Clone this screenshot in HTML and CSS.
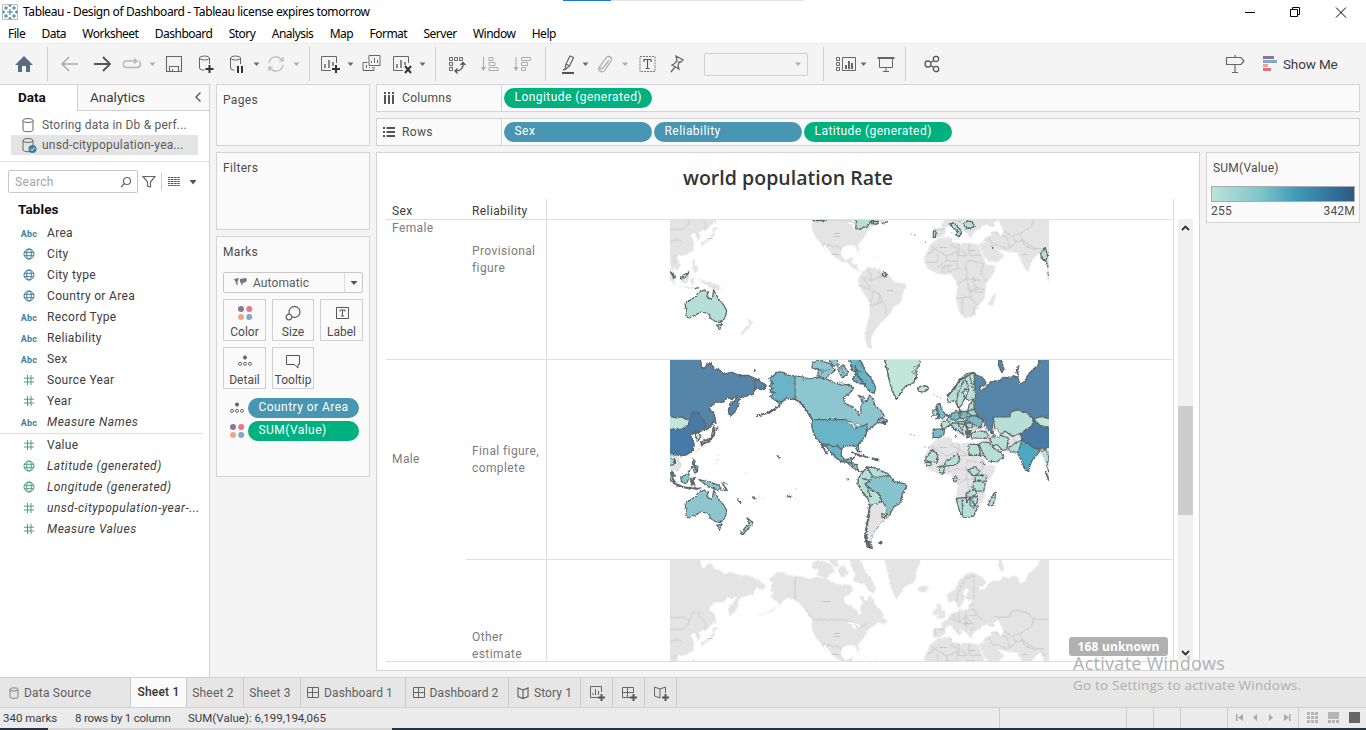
FILE: index.html
```html
<!DOCTYPE html>
<html lang="en">
<head>
<meta charset="utf-8">
<title>Tableau - Design of Dashboard</title>
<link rel="stylesheet" href="styles.css">
</head>
<body>
<svg class="defs" width="0" height="0">
  <defs>
    <filter id="rough" x="0" y="0" width="1" height="1"><feTurbulence type="fractalNoise" baseFrequency="0.16" numOctaves="2" seed="4"/><feDisplacementMap in="SourceGraphic" scale="9" xChannelSelector="R" yChannelSelector="G"/></filter>
    <g id="i-caret"><path d="M-3-1.500H3L0 2z" fill="#6b6b6b"/></g>
    <g id="i-abc"><text x="0" y="4" text-anchor="middle" class="abc">Abc</text></g>
    <g id="i-globe" fill="none" stroke="currentColor"><circle r="5"/><ellipse rx="2.300" ry="5"/><path d="M-5-1.700H5M-5 1.700H5" /></g>
    <g id="i-hash" fill="none" stroke="currentColor"><path d="M-1.500-5V5M2-5V5M-5-1.800H5M-5 2H5"/></g>
    <g id="i-four"><circle cx="-4" cy="-4" r="3" fill="#87779b"/><circle cx="4.200" cy="-4" r="3" fill="#ed7587"/><circle cx="-4" cy="4" r="3" fill="#eca884"/><circle cx="4.200" cy="4" r="3" fill="#84a7c9"/></g>
    <g id="i-detail" fill="none" stroke="#666"><circle cy="-3.500" r="1.600" fill="#666"/><circle cx="-5" cy="2.800" r="1.500"/><circle cy="2.800" r="1.500"/><circle cx="5" cy="2.800" r="1.500"/></g>
    <g id="i-db" fill="none" stroke="#666"><ellipse cy="-4.500" rx="5" ry="2"/><path d="M-5-4.500V5C-5 7.300 5 7.300 5 5V-4.500"/></g>
    <g id="i-book" fill="none" stroke="#666" stroke-width="1.200"><path d="M0-3L-5-5V3.500L0 5.500L5 3.500V-5zV5.500"/></g>

    <g id="west">
      <path d="M20 5H120L124 34L133 40L142 27L154 25L160 38L180 45L190 57L215 51L240 61L262 60L282 68L300 76L318 93L308 104L292 97L284 104L280 117L262 121L240 127L230 158L222 172L210 183L205 165L212 146L224 137L232 122L214 130L202 127L190 140L165 140L150 155L147 165L160 170L165 190L155 207L142 222L130 224L117 231L121 246L115 255L108 247L105 232L92 240L100 255L102 270L98 285L80 298L65 301L50 300L55 315L62 330L50 346L42 335L37 348L46 365L38 355L30 320H20z"/>
      <path d="M161 171L166 190L168 205L162 200zM160 213L174 219L164 225L161 242L147 254L140 261L122 268L128 258L145 252L155 240zM122 262L130 265L127 274zM98 310L106 318L101 327L114 334L112 348L104 354L98 335zM84 351L97 334M22 345L34 356L48 388L32 375zM62 367L75 360L85 354L89 365L79 385L65 381zM92 369L106 366L99 374L105 390L98 384L95 392zM48 391L75 397L110 401L125 397M115 372L130 376L150 380L177 390L185 405L198 405L168 402L149 395L130 383zM190 380L204 387M75 445L90 435L105 425L115 412L125 408L133 404L145 412L140 422L152 432L158 425L161 404L168 417L175 430L190 448L200 465L197 482L190 495L180 502L165 498L150 488L149 478L138 473L122 470L105 480L85 488L77 480L79 465zM170 509L184 508L179 523zM261 488L268 493L278 502L270 516L264 519L249 537L241 536L257 515L269 508zM278 47L290 44"/>
      <path d="M405 62L385 60L368 51L352 50L339 63L326 70L341 84L328 92L338 98L328 109L343 111L332 125L345 134L355 141L360 149L330 171L290 181L315 176L350 157L370 136L381 127L405 132L420 141L436 161L458 193L456 215L462 237L472 252L485 264L492 280L502 296L494 283L491 265L508 285L514 295L530 309L545 319L560 320L578 337L594 345L607 352L615 349L596 347L590 328L574 325L576 313L583 305L568 310L555 315L543 299V286L549 275L564 271L583 270L594 289L600 289L593 269L605 255L617 240L622 226L635 215L655 201L676 205L682 194L666 188L652 195L673 182L663 166L645 150L639 131L629 119L620 139L610 125L597 121L610 143L602 151L603 174L597 180L592 166L571 151L555 144L550 127L566 117L580 99L568 87L545 89L521 82L500 72L470 65L450 71L430 65z"/>
      <path d="M458 22L475 14L510 25L525 46L495 70L472 59L477 43L456 38zM502 5L519 31L535 35L530 5zM533 42L549 28L566 53L546 67zM557 5L570 15L576 43L588 55L578 75L600 85L615 85L625 105L642 115L647 96L632 67L616 50L604 20L590 5zM672 5L682 45L688 75L696 105L709 132L723 112L735 93L760 82L769 65L768 45L777 29L784 5zM773 101L785 91L801 93L807 101L791 110L778 108zM586 294L602 299L625 306M635 308L655 313M665 198L683 198L671 206zM350 300L360 307M276 424L286 431M233 433L244 442"/>
      <path d="M595 370L605 355L622 335L645 338L669 349L685 357L695 370L705 380L735 386L740 393L727 415L722 442L700 455L688 480L675 490L665 500L652 517L640 530L632 555L637 580L622 575L615 545L618 520L628 480L630 450L624 430L607 410L594 387z"/>
    </g>
    <g id="east">
      <path d="M294 141L292 118L315 101L327 75L350 55L370 51L400 68L408 82L402 91L388 94L390 104L405 99L417 84L430 76L447 78L460 65L482 69L490 61L503 66L510 85L525 79L535 57L564 29L573 5H610V380L596 378L588 352L597 340L585 319L580 310L574 289L560 300L548 312L541 328L536 349L524 340L512 311L502 292L480 290L458 285L435 280L412 262L398 256L405 249L425 238L422 228L403 217L389 220L372 230L361 248L353 236L339 225L325 219L336 232L329 241L311 222L300 208L286 218L284 237L265 247L249 246L250 221L276 219L274 201L289 195L304 175L325 171L329 159L335 165L354 164L357 149L370 132L353 135L347 128L356 102L348 100L338 110L345 125L335 149L325 159L315 135z"/>
      <path d="M222 310L240 270L262 250L300 245L307 260L332 266L350 262L385 267L395 299L410 328L437 331L429 358L410 381L405 405L403 430L385 452L371 482L344 488L331 476L318 434L322 405L321 385L312 370L300 355L272 357L252 350L232 340zM387 267L397 260L417 262L432 279L445 287L464 302L441 320L415 317L401 300zM417 440L429 419L437 411L435 430L428 451L416 450zM249 167L259 160L265 178L248 180zM257 190L268 180L260 158L261 146L270 144L273 158L286 177L283 188zM448 5L445 29L456 52L462 40L454 16L458 5zM536 348L542 350M308 18L320 12M308 226L312 240"/>
    </g>
    <g id="borders">
      <path d="M30 183L48 188L65 185L88 195L99 172L112 170L125 188L139 206L133 219L142 225M30 223L64 222L85 208L88 195M405 62V132L436 161L458 193H555L570 198L590 214L611 211L622 205M485 265L508 268L522 276L533 270L545 284M615 365L632 376L660 365L680 361M600 390L635 405L655 412L666 437L680 460L675 478M630 450L653 445L666 440M622 337L634 360L632 376M608 366L632 400M640 408L630 450M653 445L660 420L650 412M657 345L662 365M672 349L676 360M30 260L55 252L70 262M48 299L38 310L48 325"/>
      <g transform="translate(570)"><path d="M320 140L324 112L345 70L372 60L371 134M430 185H479L483 170L502 164L532 173L550 190L597 194M435 204L426 224L450 238L466 228L487 243L510 235L546 212L550 191M300 190L324 200L345 188L370 205M325 168L328 199M347 166L349 217M372 160L382 181L406 198M284 222L255 220L255 242M417 248L430 272L441 267L471 282M474 247L476 278L499 261L517 254L552 278L580 281M240 270L290 302L322 288M302 248L305 270L357 300M263 295L262 321H224M326 264V301L357 300V267M263 335L290 315L322 319M273 354L278 334L310 328M322 385L350 370V340L320 340M350 370L390 375M352 314L400 324M318 429L360 425V405L388 400M337 478V430M362 408L402 411M371 363L374 408M357 300H395M290 302V318M322 288L322 340M322 340L296 350M250 270V290L230 296M400 324L392 355L410 378M352 314L345 340M350 370L358 405M376 395L404 405M360 425L385 452M371 482L372 450M283 335V356M295 330V354M517 254L525 270L560 285M510 235L517 254M487 243L499 261M450 238L474 247M572 284L578 300L590 296M310 175L315 195M337 190L352 183M360 180L384 181M335 205L370 205M357 150L372 148M354 165L372 160M362 229L372 215"/></g>
    </g>
    <g id="base-map"><g filter="url(#rough)" fill="#e4e4e4" stroke="#e4e4e4"><use href="#west"/><use href="#east" transform="translate(570)"/></g><use href="#borders" fill="none" stroke="#bbb" stroke-width="1.800" filter="url(#rough)"/><g fill="#fff"><path d="M963 215l17-8 13 8 18-4 5 16-29 4-22 5zM1000 202l16-7 5 14 10 21-8 13-10-13z"/><path d="M564 200l18 4 9 17-12-3-2-11-10-2zM585 204l18 7-9 4z"/></g><g class="mapword"><text x="520" y="237">United</text><text x="520" y="246">States</text><text x="487" y="139">Canada</text><text x="515" y="298">Mexico</text><text x="682" y="408">Brazil</text><text x="840" y="278">Algeria</text><text x="928" y="287">Egypt</text><text x="1085" y="298">India</text><text x="140" y="250">Japan</text><text x="118" y="450">Australia</text></g></g>
  </defs>
</svg>

<div class="app">
  <header class="titlebar">
    <svg class="logo" width="18" height="18" viewBox="-9 -9 18 18"><path d="M-7.500-7.500H7.500V7.500H-7.500z" fill="#fff" stroke="#aaa" stroke-width=".8"/><path d="M0-3V3M-3 0H3M-4-6V-2M-6-4H-2M4-6V-2M2-4H6M-4 2V6M-6 4H-2M4 2V6M2 4H6M0-7.500V-5M-1.500-6.300H1.500M0 5V7.500M-1.500 6.300H1.500M-7.500 0H-5M-6.300-1.500V1.500M5 0H7.500M6.300-1.500V1.500" stroke="#3e819b" stroke-width="1.100"/></svg>
    <span class="caption">Tableau - Design of Dashboard - Tableau license expires tomorrow</span>
    <span class="progress"></span>
    <svg class="winbtns" width="120" height="20" viewBox="1240 0 120 20" fill="none" stroke="#000"><path d="M1245 10.500H1255M1290.500 7.500H1297.500V14.500H1290.500zM1292.500 7V5.500H1299.500V12.500H1298M1336 5.500L1346 15.500M1346 5.500L1336 15.500"/></svg>
  </header>
  <nav class="menu"><span>File</span><span>Data</span><span>Worksheet</span><span>Dashboard</span><span>Story</span><span>Analysis</span><span>Map</span><span>Format</span><span>Server</span><span>Window</span><span>Help</span></nav>

  <div class="toolbar">
    <div class="group g1"><svg width="47" height="24" viewBox="-24 -12 47 24"><path d="M0-8L9 1H6V8H2V2H-2V8H-6V1H-9z" fill="#5b6b7e"/></svg></div>
    <div class="group g2">
      <svg width="32" height="24" viewBox="-16 -12 32 24"><path d="M8 0H-7M-1-7L-8 0L-1 7" stroke="#aaa" fill="none" stroke-width="1.500"/></svg>
      <svg width="32" height="24" viewBox="-16 -12 32 24"><path d="M-8 0H7M1-7L8 0L1 7" stroke="#555" fill="none" stroke-width="1.800"/></svg>
      <svg width="28" height="24" viewBox="-14 -12 28 24"><path d="M-1-3H-5C-10-3-10 3.500-5 3.500H5C9 3.500 9-1 7-3M-1-3H4M2-5.500L5-3L2-.5" stroke="#b5b5b5" fill="none" stroke-width="1.400"/></svg>
      <svg class="dim" width="13" height="24" viewBox="-6.500 -12 13 24"><use href="#i-caret"/></svg>
      <svg width="30" height="24" viewBox="-15 -12 30 24"><path d="M-7.500-7.500H7.500V7.500H-7.500zM-4.500 7V2.500H4.500V7M-1.500 7V5" stroke="#666" fill="none" stroke-width="1.100"/></svg>
      <svg width="33" height="24" viewBox="-16.500 -12 33 24"><g fill="none" stroke="#666"><ellipse cy="-6" cx="-1" rx="5" ry="2"/><path d="M-6-6V4C-6 6-3 6-1 6M4-6V0"/><path d="M4 1V9M0 5H8" stroke="#333" stroke-width="2"/></g></svg>
      <svg width="29" height="24" viewBox="-14.500 -12 29 24"><g fill="none" stroke="#666"><ellipse cy="-6" cx="-1" rx="5" ry="2"/><path d="M-6-6V4C-6 6-3 6-2 6M4-6V0"/><path d="M1.500 2V9M5.500 2V9" stroke="#333" stroke-width="2"/></g></svg>
      <svg width="11" height="24" viewBox="-5.500 -12 11 24"><use href="#i-caret"/></svg>
      <svg width="28" height="24" viewBox="-14 -12 28 24"><path d="M-7-1A7 7 0 0 1 5-5L7-3M7-7V-3H3M7 1A7 7 0 0 1-5 5L-7 3M-7 7V3H-3" stroke="#b5b5b5" fill="none" stroke-width="1.200"/></svg>
      <svg class="dim" width="13" height="24" viewBox="-6.500 -12 13 24"><use href="#i-caret"/></svg>
    </div>
    <div class="group g3">
      <svg width="30" height="24" viewBox="-15 -12 30 24"><path d="M1 6.500H-8.500V-7.500H6.500V-1" stroke="#666" fill="none"/><path d="M-5 4V0M-1 4V-4M3 2V-2" stroke="#666" stroke-width="1.500"/><path d="M6 1V9M2 5H10" stroke="#333" stroke-width="2"/></svg>
      <svg width="11" height="24" viewBox="-5.500 -12 11 24"><use href="#i-caret"/></svg>
      <svg width="31" height="24" viewBox="-15.500 -12 31 24"><path d="M-2.500-8.500H8.500V1.500H-2.500zM-4-1.500H-8.500V6.500H2.500V3M0-1V-3M3-1V-6M6-1V-4M-5 4V1M-2 4V3M1 4V3" stroke="#666" fill="none"/></svg>
      <svg width="30" height="24" viewBox="-15 -12 30 24"><path d="M1 6.500H-8.500V-7.500H6.500V-1" stroke="#666" fill="none"/><path d="M-5 4V0M-1 4V-4M3 1V-2" stroke="#666" stroke-width="1.500"/><path d="M3 2L9 9M9 2L3 9" stroke="#333" stroke-width="2"/></svg>
      <svg width="11" height="24" viewBox="-5.500 -12 11 24"><use href="#i-caret"/></svg>
    </div>
    <div class="group g4">
      <svg width="32" height="24" viewBox="-16 -12 32 24"><path d="M-7.500-6.500h3v3h-3zM-2.500-6.500h3v3h-3zM2.500-6.500h3v3h-3zM-7.500-1.500h3v3h-3zM-7.500 3.500h3v3h-3z" stroke="#666" fill="none"/><path d="M6-1C7 4 3 7-1 7M3.500 1L6-1.500L8.500 1M.5 4.500L-2 7L.5 9.500" stroke="#555" fill="none" stroke-width="1.300"/></svg>
      <svg width="33" height="24" viewBox="-16.500 -12 33 24"><path d="M-6-7V5M-.5-6.500h4v3h-4zM-.5-1.500h6v3h-6zM-.5 3.500h9v3h-9z" stroke="#aaa" fill="none"/><path d="M-8.500 3H-3.500L-6 7z" fill="#aaa"/></svg>
      <svg width="32" height="24" viewBox="-16 -12 32 24"><path d="M-6-7V5M-.5-6.500h9v3h-9zM-.5-1.500h6v3h-6zM-.5 3.500h4v3h-4z" stroke="#aaa" fill="none"/><path d="M-8.500 3H-3.500L-6 7z" fill="#aaa"/></svg>
    </div>
    <div class="group g5">
      <svg width="26" height="24" viewBox="-13 -12 26 24"><path d="M-2 0L2-8L5.500-6.500L1.500 2L-3 5.500zM-2 0L1.500 2M-3 5L-5 6" stroke="#666" fill="none" stroke-width="1.200"/><path d="M-6 9H6" stroke="#555" stroke-width="2"/></svg>
      <svg width="9" height="24" viewBox="-4.500 -12 9 24"><use href="#i-caret"/></svg>
      <svg width="30" height="24" viewBox="-15 -12 30 24"><path d="M4-4L-2 4C-4 6-6 4-5 2L1-6C3-9 8-7 6-3L0 6C-3 10-8 6-6 3M3-2L-1 3" stroke="#aaa" fill="none" stroke-width="1.200"/></svg>
      <svg class="dim" width="10" height="24" viewBox="-5 -12 10 24"><use href="#i-caret"/></svg>
      <svg width="35" height="24" viewBox="-17.500 -12 35 24"><path d="M-7.500-7.500H7.500V7.500H-7.500z" stroke="#777" fill="none" stroke-dasharray="2 1"/><path d="M-3.500-2V-4.500H3.500V-2M0-4V4M-2 4.500H2" stroke="#555" fill="none" stroke-width="1.200"/></svg>
      <svg width="24" height="24" viewBox="-12 -12 24 24"><path d="M-1-8L6-4L4-2L2-2L1 2L2 5L-5 1L-3 0L0-3zM-2 3L-6 8" stroke="#666" fill="none" stroke-width="1.300"/></svg>
      <div class="combo"><svg class="dim" width="12" height="10" viewBox="-6 -5 12 10"><use href="#i-caret"/></svg></div>
    </div>
    <div class="group g6">
      <svg width="28" height="24" viewBox="-14 -12 28 24"><path d="M-8.500-6.500h3v3h-3zM-8.500-1.500h3v3h-3zM-8.500 3.500h3v3h-3zM-2.500-6.500H10.500V6.500H-2.500z" stroke="#666" fill="none"/><path d="M1 5V1M4 5V-3M7 5V-1" stroke="#666" stroke-width="2"/></svg>
      <svg width="9" height="24" viewBox="-4.500 -12 9 24"><use href="#i-caret"/></svg>
      <svg width="34" height="24" viewBox="-18 -12 34 24"><path d="M-8.500-6H8.500" stroke="#666" stroke-width="2"/><path d="M-6.500-5V3.500H6.500V-5M0 4V7.500M-3 7.500H3" stroke="#666" fill="none"/></svg>
    </div>
    <div class="group g7"><svg width="30" height="24" viewBox="-15 -12 30 24"><g stroke="#555" fill="none" stroke-width="1.300"><circle cx="-4" r="3"/><circle cx="4" cy="-5" r="2.700"/><circle cx="4" cy="5" r="2.700"/><path d="M-1.500-1.500L2-3.500M-1.500 1.500L2 3.500"/></g></svg></div>
    <svg class="guide" width="20" height="24" viewBox="-10 -12 20 24"><path d="M-8.500-6.500H6L9-3L6 .5H-8.500zM0-9V-7M0 1V9M-3 8.500H3" stroke="#666" fill="none" stroke-width="1.200"/></svg>
    <svg class="showicon" width="16" height="18" viewBox="0 0 16 18"><path d="M0 1h11v3H0z" fill="#87779b"/><path d="M0 5h14v3H0z" fill="#84a7c9"/><path d="M0 9h5v3H0z" fill="#eca884"/><path d="M0 13h8v3H0z" fill="#e06f82"/></svg>
    <span class="showme">Show Me</span>
  </div>

  <main class="main">
    <aside class="side">
      <div class="sidetabs"><b>Data</b><span>Analytics</span><svg width="8" height="12" viewBox="0 0 8 12"><path d="M6.500 1.500L2 6L6.500 10.500" fill="none" stroke="#555" stroke-width="1.300"/></svg></div>
      <div class="sources">
        <div class="src"><svg width="16" height="16" viewBox="-7 -8 16 16"><use href="#i-db" /></svg><span>Storing data in Db &amp; perf...</span></div>
        <div class="src on"><svg width="16" height="16" viewBox="-7 -8 16 16"><use href="#i-db"/><circle cx="4.500" cy="4" r="4" fill="#3f7d9c"/><path d="M2.500 4L4 5.500L6.700 2.500" fill="none" stroke="#fff"/></svg><span>unsd-citypopulation-yea...</span></div>
      </div>
      <div class="searchrow"><div class="search"><span>Search</span><svg width="12" height="12" viewBox="0 0 12 12"><g fill="none" stroke="#666" stroke-width="1.200"><circle cx="7" cy="5" r="3.500"/><path d="M4.500 7.500L1 11"/></g></svg></div>
        <svg width="14" height="14" viewBox="0 0 14 14"><path d="M1 1.500H13L8.500 7V12L5.500 11V7z" fill="none" stroke="#666" stroke-width="1.200"/></svg><i></i>
        <svg class="lines" width="12" height="11" viewBox="0 0 12 11"><path d="M0 1.500H12M0 3.500H12M0 5.500H12M0 7.500H12M0 9.500H12" stroke="#555" stroke-dasharray="2.500 .6"/></svg><svg width="8" height="6" viewBox="-4 -3 8 6"><path d="M-3.500-2H3.500L0 2.500z" fill="#555"/></svg></div>
      <h2>Tables</h2>
      <ul class="fields dims">
        <li><svg viewBox="-9 -8 18 16"><use href="#i-abc"/></svg>Area</li>
        <li><svg viewBox="-9 -8 18 16"><use href="#i-globe"/></svg>City</li>
        <li><svg viewBox="-9 -8 18 16"><use href="#i-globe"/></svg>City type</li>
        <li><svg viewBox="-9 -8 18 16"><use href="#i-globe"/></svg>Country or Area</li>
        <li><svg viewBox="-9 -8 18 16"><use href="#i-abc"/></svg>Record Type</li>
        <li><svg viewBox="-9 -8 18 16"><use href="#i-abc"/></svg>Reliability</li>
        <li><svg viewBox="-9 -8 18 16"><use href="#i-abc"/></svg>Sex</li>
        <li class="green"><svg viewBox="-9 -8 18 16"><use href="#i-hash"/></svg>Source Year</li>
        <li class="green"><svg viewBox="-9 -8 18 16"><use href="#i-hash"/></svg>Year</li>
        <li class="gen"><svg viewBox="-9 -8 18 16"><use href="#i-abc"/></svg>Measure Names</li>
      </ul>
      <ul class="fields meas">
        <li class="green"><svg viewBox="-9 -8 18 16"><use href="#i-hash"/></svg>Value</li>
        <li class="green gen"><svg viewBox="-9 -8 18 16"><use href="#i-globe"/></svg>Latitude (generated)</li>
        <li class="green gen"><svg viewBox="-9 -8 18 16"><use href="#i-globe"/></svg>Longitude (generated)</li>
        <li class="green gen"><svg viewBox="-9 -8 18 16"><use href="#i-hash"/></svg>unsd-citypopulation-year-...</li>
        <li class="green gen"><svg viewBox="-9 -8 18 16"><use href="#i-hash"/></svg>Measure Values</li>
      </ul>
    </aside>

    <section class="cards">
      <div class="card pages">Pages</div>
      <div class="card filters">Filters</div>
      <div class="card marks">Marks
        <div class="auto"><svg width="13" height="9" viewBox="0 0 13 9"><path d="M0 1l5-1-1 3-1 1 1 1-1 3-1-3-1-2zM6 1l6-1 1 2-2 3-1-1-1 1-1 3-1-3-1-1z" fill="#777"/></svg><span>Automatic</span><em><svg width="8" height="6" viewBox="-4 -3 8 6"><path d="M-3.500-2H3.500L0 2z" fill="#555"/></svg></em></div>
        <div class="buttons">
          <div><svg viewBox="-9 -9 18 18"><use href="#i-four"/></svg>Color</div>
          <div><svg viewBox="-9 -9 18 18"><g fill="#fafafa" stroke="#666" stroke-width="1.300"><circle cx="1.500" cy="-1" r="5.500"/><circle cx="-4" cy="4" r="2.800"/></g></svg>Size</div>
          <div><svg viewBox="-9 -9 18 18"><path d="M-5.500-5.500H6.500V5.500H-5.500zM-2-1.500V-3H3V-1.500M.5-3V3M-1 3H2" fill="none" stroke="#555"/></svg>Label</div>
          <div><svg viewBox="-9 -9 18 18"><use href="#i-detail"/></svg>Detail</div>
          <div><svg viewBox="-9 -9 18 18"><path d="M-6.500-5.500H6.500V3.500H5V7L1.500 3.500H-6.500z" fill="none" stroke="#555"/></svg>Tooltip</div>
        </div>
        <div class="enc"><svg viewBox="-9 -9 18 18"><use href="#i-detail"/></svg><span class="pill blue">Country or Area</span></div>
        <div class="enc"><svg viewBox="-9 -9 18 18"><use href="#i-four"/></svg><span class="pill">SUM(Value)</span></div>
      </div>
    </section>

    <section class="work">
      <div class="shelf"><div class="shelfname"><svg width="12" height="12" viewBox="0 0 12 12"><path d="M2 0V2M6 0V2M10 0V2M2 3V12M6 3V12M10 3V12" stroke="#555" stroke-width="2"/></svg>Columns</div><span class="pill">Longitude (generated)</span></div>
      <div class="shelf"><div class="shelfname"><svg width="12" height="12" viewBox="0 0 12 12"><path d="M0 2H2M0 6H2M0 10H2M3.500 2H12M3.500 6H12M3.500 10H12" stroke="#555" stroke-width="2"/></svg>Rows</div><span class="pill blue">Sex</span><span class="pill blue">Reliability</span><span class="pill">Latitude (generated)</span></div>
      <div class="lower">
        <div class="view">
          <h1>world population Rate</h1>
          <div class="viz">
            <div class="head"><span>Sex</span><span>Reliability</span></div>
            <div class="corner"></div>
            <div class="sex female">Female</div><div class="rel r1">Provisional figure</div>
            <div class="pane"><svg class="map m1" viewBox="30 194 1137 420">
              <use href="#base-map"/>
              <g filter="url(#rough)" fill="#b5dfd8" stroke="#56615f" stroke-width="3.500"><path d="M75 445L90 435L105 425L115 412L125 408L133 404L145 412L140 422L152 432L158 425L161 404L168 417L175 430L190 448L200 465L197 482L190 495L180 502L165 498L150 488L149 478L138 473L122 470L105 480L85 488L77 480L79 465zM170 509L184 508L179 523zM562 180L590 196L587 220L602 222L610 215L620 216L628 204L649 185L640 180M638 205L650 207L655 198L640 198zM820 227L829 227L826 246H820zM868 206L882 203L891 210L902 225L905 232L897 245L888 237L895 229L880 218zM911 205L922 197L937 199L943 211L932 220L916 217zM1142 294L1156 278L1163 300L1157 317L1144 309zM1160 318L1164 336M30 348L42 360L43 369zM60 370L73 357L86 350L78 365L65 371zM105 400L116 397M665 204L684 199M995 275L1000 277M875 231L879 235M889 240L899 243M1163 350L1167 361M458 196H500"/><circle cx="673" cy="358" r="6"/></g><path d="M752 235l3 1M762 238l5 3M795 261h3" stroke="#777" stroke-width="3"/></svg></div>
            <div class="sex male">Male</div><div class="rel r2">Final figure, complete</div>
            <div class="pane"><svg class="map m2" viewBox="30 14 1137 600">
              <use href="#base-map"/>
              <g filter="url(#rough)" stroke="#5f6668" stroke-width="3.500" stroke-linejoin="round">
                <use href="#west" fill="#8ec6cf"/>
                <path fill="#5486a9" d="M20 5H120L124 34L133 40L142 27L154 25L160 38L180 45L190 57L215 51L240 61L262 60L282 68L300 76L318 93L308 104L292 97L284 104L280 117L262 121L240 127L230 158L222 172L210 183L205 165L212 146L224 137L232 122L214 130L202 127L190 140L165 140L150 155L147 165L160 170L165 190L155 207L142 222L130 224L139 206L125 188L112 170L99 172L88 195L65 185L48 188L20 180zM284 68V104"/>
                <path fill="#477aa6" d="M20 222L64 222L85 208L88 195L99 172L112 170L125 188L139 206L133 219L117 231L105 228L92 240L100 255L102 270L98 285L80 298L65 301L48 299L20 289z"/>
                <path fill="#c3e6da" d="M20 180L48 188L65 185L88 195L85 208L64 222H20zM117 231L121 246L115 255L108 247L105 232zM672 5L682 45L688 75L696 105L709 132L723 112L735 93L760 82L769 65L768 45L777 29L784 5zM773 101L785 91L801 93L807 101L791 110L778 108z"/>
                <path fill="#e3e3e3" stroke="#e3e3e3" d="M34 304L50 302L55 315L62 330L50 346L42 335L37 346L30 330z"/>
                <path fill="#a7d7d5" d="M26 308L44 313L43 328L26 330zM261 488L268 493L278 502L270 516L264 519L249 537L241 536L257 515L269 508z"/>
                <path fill="#6bb4c7" d="M405 62L385 60L368 51L352 50L339 63L326 70L341 84L328 92L338 98L328 109L343 111L332 125L345 134L355 141L370 136L381 127L405 132zM458 193H555L570 198L582 218L597 215L611 211L622 205L620 226L617 240L605 255L593 269L600 289L594 289L583 270L564 271L549 275L545 284L533 270L522 276L508 268L485 265L472 252L462 237L456 215zM485 265L508 268L522 276L533 270L545 284L543 299L555 315L568 310L583 305L576 313L574 325L560 320L545 319L530 309L508 285L491 265M557 5L570 15L576 43L588 55L578 75L600 85L615 85L625 105L642 115L647 96L632 67L616 50L604 20L590 5z"/>
                <path fill="#b7dfd7" d="M595 370L605 355L622 335L645 338L669 349L685 357L680 362L660 365L632 376L615 385L635 405L655 412L666 437L653 445L630 450L624 430L607 410L594 387zM605 369L632 376M622 336L638 363M620 390L632 425"/>
                <path fill="#87c3cd" d="M615 385L632 376V365H655L675 362L690 361L700 378L735 386L740 393L727 415L722 442L700 455L688 480L675 472L680 460L666 437L655 412L635 405z"/>
                <path fill="#e3e3e3" stroke="none" d="M632 451L653 445L666 440L679 457L676 478L688 481L676 492L665 501L651 518L641 529L633 557L623 565L620 540L630 486z"/>
                <path fill="#b7dfd7" d="M665 475L680 479L678 487L666 486z"/>
                <path fill="none" stroke-width="9" d="M616 535L620 558L631 577"/><path fill="none" stroke-width="5" d="M630 445L624 485L617 535M655 562H667M405 132L423 143L440 166L458 194M98 320L112 351M33 350L43 383L75 397L115 401M352 300L361 308M278 425L285 431M233 433L242 442M160 215L164 233L149 258L126 266M380 425L394 422M560 372H567M360 150L330 171L290 181M482 265L500 294M92 372L103 388M186 382L202 406M590 297L625 306M637 309L655 312"/>
                <path fill="none" stroke-width="2" d="M470 38L490 48L510 42M484 58L488 40M545 38L553 58M575 30L590 45L610 52M598 70L620 76M590 20L605 35M430 65V75M500 70L530 85L545 82L570 92M690 70L680 60M765 60L755 50L770 42M760 35L778 30"/>
                <path stroke-width="1.500" stroke-dasharray="3 9" fill="none" d="M298 422L314 434M405 400L415 405M385 415L424 440M175 300L171 330M255 350v3M107 290L130 276"/>
              </g>
              <path fill="#fff" stroke="#5f6668" stroke-width="1.500" d="M563 199l16 3 9 20-8-4-4-10-13-4zM590 203l14 7-9 4-8-6z"/>
              <g transform="translate(570)" filter="url(#rough)" stroke="#5f6668" stroke-width="3.500" stroke-linejoin="round">
                <path fill="#5486a9" d="M372 55L400 68L408 82L402 91L388 94L390 104L405 99L417 84L430 76L447 78L460 65L482 69L490 61L503 66L510 85L525 79L535 57L564 29L573 5H610V194L550 190L532 173L502 164L483 170L479 185H430L426 224L435 239L403 217L406 198L382 181L372 160L377 130zM448 5L445 29L456 52L462 40L454 16L458 5zM505 66L498 40L508 30"/>
                <path fill="#b7dfd7" d="M430 185H479L483 170L502 164L532 173L550 190L546 212L510 235L487 243L466 228L450 238L435 230zM294 141L292 118L315 101L327 75L350 55L372 52L377 130L353 135L347 128L356 102L348 100L338 110L345 125L335 149L325 159L315 135zM320 140L324 112L345 70L356 100M359 63L372 105M276 219L274 201L289 195L304 175L325 171L354 164L357 149L372 132V160L382 181L352 190L335 225L311 222L300 208L286 218zM362 235L385 225L409 230L417 242L405 249L365 248zM417 248L450 240L474 247L471 282L458 285L441 267L430 272zM387 267L397 260L417 262L432 279L445 287L464 302L441 320L415 317L401 300zM476 278L499 261L517 254L505 290H480zM357 267H385L393 300H357zM229 305L245 285L263 295L262 321H224zM224 322L239 318L245 330L232 332zM263 335L282 330L290 315L302 311L322 295L330 313L320 327L298 331L280 332zM268 335L283 335L280 354L269 352zM307 370L318 364L324 374L314 380zM352 344L377 335L390 351L371 363zM376 360H410L408 379L388 377L375 375zM371 379L390 374L405 387L401 407H376L369 396zM348 413L375 402L380 417L361 425L350 440zM318 429L360 425L373 450L385 452L371 482L344 488L331 476zM360 425L383 424L382 440L371 456L360 450zM337 478V430M417 440L429 419L437 411L435 430L428 451L416 450zM249 167L259 160L265 178L248 180zM574 289L587 281L598 310L589 329L597 350M395 320L405 329"/>
                <path fill="#79bbc9" d="M250 221L284 222L281 239L265 247L249 246zM305 174L323 168L330 187L317 196L300 190zM331 168L352 169L351 187L334 190zM353 183L377 181L402 196L389 217L372 208L354 203zM257 190L268 180L260 158L261 146L270 144L273 158L286 177L283 188z"/>
                <path fill="#a7d7d5" d="M302 206L320 202L337 225L340 239L322 223L311 219zM324 200L345 197L343 207L325 205zM348 203L367 202L367 216L349 219zM346 228L363 226L358 245L351 248zM354 166L374 162L379 179L359 180z"/>
                <path fill="#477aa6" d="M510 235L546 212L550 191L570 210L610 222V270L580 281L552 278L517 254z"/>
                <path fill="#c3e6da" d="M551 190L573 184L610 192V218L570 210z"/>
                <path fill="#4da8c0" d="M502 292L508 280L517 254L552 278L572 284L560 300L548 312L541 328L536 349L524 340L512 311z"/>
                <path fill="#fff" stroke="#777" stroke-width="2" d="M428 225L440 216L450 238L449 247L437 244zM393 218L407 211L416 226L405 228L392 225L380 230L375 222z"/>
                <path fill="none" stroke-width="5" d="M292 125L330 74L370 52M350 230L353 245M288 175L297 186M585 345L597 376M327 162L335 174M314 240L320 244M295 197L298 202M5 290L35 304M65 311L88 316M15 30L22 60L35 75L45 95M345 100L340 110M258 152L268 185M346 205L358 240"/>
                <path fill="none" stroke-width="2" stroke-dasharray="4 7" d="M180 237L202 242M223 275L240 278M250 118L275 130"/>
              </g></svg></div>
            <div class="sex"></div><div class="rel r3">Other estimate</div>
            <div class="pane"><svg class="map m3" viewBox="30 14 1137 303"><use href="#base-map"/></svg></div>
          </div>
          <div class="scroll"><svg width="15" height="16" viewBox="0 0 15 16"><path d="M4 11L7.500 7.500L11 11" fill="none" stroke="#333" stroke-width="1.800"/></svg><i></i><svg width="15" height="16" viewBox="0 0 15 16"><path d="M4 6L7.500 9.500L11 6" fill="none" stroke="#333" stroke-width="1.800"/></svg></div>
          <div class="unknown">168 unknown</div>
        </div>
        <div class="legend"><span>SUM(Value)</span><div class="ramp"></div><div class="range"><span>255</span><span>342M</span></div></div>
      </div>
    </section>
  </main>

  <div class="tabs">
    <span class="ds"><svg viewBox="-8 -8 16 16"><g transform="scale(.8)"><use href="#i-db"/></g></svg>Data Source</span><span class="sheet active">Sheet 1</span><span class="sheet">Sheet 2</span><span class="sheet">Sheet 3</span>
    <span class="d1"><svg viewBox="-8 -8 16 16"><path d="M-5.500-5.500H5.500V4.500H-5.500zM-.5-5.500V4.500M-5.500-.5H5.500" class="ln"/></svg>Dashboard 1</span>
    <span class="d2"><svg viewBox="-8 -8 16 16"><path d="M-5.500-5.500H5.500V4.500H-5.500zM-.5-5.500V4.500M-5.500-.5H5.500" class="ln"/></svg>Dashboard 2</span>
    <span class="st"><svg viewBox="-8 -8 16 16"><use href="#i-book"/></svg>Story 1</span>
    <span class="add"><svg viewBox="-8 -8 16 16"><path d="M1 4.500H-6.500V-6.500H4.500V-1M-4 2V0M-1.500 2V-4M1.500 2V-2" class="ln"/><path d="M4.500 1V8M1 4.500H8" class="plus"/></svg></span>
    <span class="add"><svg viewBox="-8 -8 16 16"><path d="M1 4.500H-6.500V-5.500H4.500V0M-1.500-5.500V4.500M-6.500-.5H4.500" class="ln"/><path d="M4.500 1V8M1 4.500H8" class="plus"/></svg></span>
    <span class="add"><svg viewBox="-8 -8 16 16"><path d="M-1-4L-6.500-6V3L-1 5zL4.500-6V0" class="ln"/><path d="M4.500 1V8M1 4.500H8" class="plus"/></svg></span>
  </div>
  <footer class="status"><span class="s1">340 marks</span><span class="s2">8 rows by 1 column</span><span class="s3">SUM(Value): 6,199,194,065</span>
    <div class="cells"><i></i><i></i><i></i><i></i></div>
    <svg width="139" height="20" viewBox="1227 708 139 20"><path d="M1227.500 708V728M1298.500 708V728" stroke="#ccc"/><path d="M1236 714h1.500v7H1236zM1243 714v7l-5-3.500zM1257 714v7l-4-3.500zM1269 714v7l4-3.500zM1284 714v7l5-3.500zM1289 714h1.500v7H1289z" fill="#aaa"/><path d="M1307 712h3v3h-3zM1311 712h3v3h-3zM1315 712h3v3h-3zM1307 716h3v3h-3zM1311 716h3v3h-3zM1315 716h3v3h-3zM1307 720h3v3h-3zM1311 720h3v3h-3zM1315 720h3v3h-3zM1328 712h11v7h-11zM1328 720h3v3h-3zM1332 720h3v3h-3zM1336 720h3v3h-3z" fill="#b5b5b5"/><path d="M1349 712h11v11h-11z" fill="#666"/></svg>
  </footer>
  <div class="taskbar"><i></i></div>
  <div class="watermark"><div>Activate Windows</div><p>Go to Settings to activate Windows.</p></div>
</div>
</body>
</html>
```

FILE: styles.css
```css
* { box-sizing: border-box; }
body { margin: 0; background: #fff; font: 12px/16px Roboto, sans-serif; letter-spacing: .32px; color: #3c3c3c; overflow: hidden; }
svg { display: block; flex: none; }
.defs { position: absolute; }
.app { width: 1366px; height: 730px; display: flex; flex-direction: column; position: relative; }
.titlebar { height: 23px; display: flex; align-items: center; padding-left: 1px; font: 12px/22px "Noto Sans", sans-serif; color: #000; letter-spacing: -.39px; position: relative; }
.caption { margin-left: 4px; }
.progress { position: absolute; left: 563px; top: 0; width: 241px; height: 1px; background: linear-gradient(90deg, #1a7bd0 48px, #e2e2e2 48px); }
.winbtns { margin-left: auto; margin-right: 6px; }
.menu { height: 20px; display: flex; gap: 16.300px; padding-left: 8px; font: 12px/21px "Noto Sans", sans-serif; letter-spacing: -.5px; color: #000; }
.toolbar { height: 41px; background: #f4f4f4; border-top: 1px solid #ececec; display: flex; align-items: center; }
.group { height: 34px; display: flex; align-items: center; border-right: 1px solid #cfcfcf; }
.g1 { width: 48px; } .g2 { width: 262px; padding-left: 6px; } .g3 { width: 126px; padding-left: 5px; } .g4 { width: 110px; padding-left: 5px; } .g5 { width: 278px; padding-left: 9px; } .g6 { width: 82px; padding-left: 7px; } .g7 { width: 50px; padding-left: 11px; border: 0; }
.dim { opacity: .5; }
.combo { width: 104px; height: 23px; margin-left: 15px; border: 1px solid #d0d0d0; border-radius: 2px; display: flex; align-items: center; justify-content: flex-end; padding-right: 3px; }
.guide { margin-left: 269px; }
.showicon { margin-left: 18px; }
.showme { margin-left: 4px; font-size: 13.500px; letter-spacing: -.15px; }
.main { height: 593px; display: flex; background: #f4f4f4; }
.side { width: 210px; background: #fff; border-right: 1px solid #d0d0d0; border-top: 1px solid #d4d4d4; flex: none; }
.sidetabs { display: flex; height: 26px; font-size: 13.500px; line-height: 25px; letter-spacing: 0; color: #3c3c3c; }
.sidetabs b { width: 77px; padding-left: 18px; color: #111; }
.sidetabs span { border-left: 1px solid #d0d0d0; border-bottom: 1px solid #d0d0d0; background: #f9f9f9; width: 117px; padding-left: 12px; }
.sidetabs svg { height: 26px; width: 15px; padding: 6px 7px 7px 0; background: #f9f9f9; border-bottom: 1px solid #d0d0d0; flex: 1; }
.sources { padding: 4px 11px 6px; border-bottom: 1px solid #e0e0e0; height: 51px; color: #5c5c5c; letter-spacing: .2px; }
.src { height: 20px; display: flex; align-items: center; padding-left: 10px; }
.src span { margin-left: 5px; }
.src.on { background: #e4e4e4; }
.searchrow { display: flex; align-items: center; height: 23px; margin: 8px 0 0 8px; }
.search { width: 130px; height: 23px; border: 1px solid #c8c8c8; border-radius: 2px; display: flex; align-items: center; justify-content: space-between; padding: 0 5px 0 6px; color: #a3a3a3; margin-right: 4px; }
.searchrow i { width: 1px; height: 17px; background: #ccc; margin: 0 6px 0 5px; }
.lines { margin-right: 9px; }
.side h2 { margin: 7px 0 4px 18px; font-size: 13.500px; line-height: 18px; letter-spacing: .1px; color: #111; }
.fields { list-style: none; margin: 0; padding: 0; }
.fields li { height: 21px; display: flex; align-items: center; padding-left: 20px; white-space: nowrap; color: #3f7d9c; -webkit-text-fill-color: #3c3c3c; }
.fields li.green { color: #4b9f86; }
.fields li.gen { font-style: italic; letter-spacing: .48px; }
.fields svg { width: 18px; height: 16px; margin-right: 9px; }
.abc { font: normal bold 9px Roboto, sans-serif; letter-spacing: .2px; fill: #457f9b; -webkit-text-fill-color: initial; }
.dims { height: 212px; margin-right: 6px; margin-left: 0; border-bottom: 1px solid #ddd; }
.meas { padding-top: 0; }
.cards { width: 154px; margin-left: 6px; flex: none; }
.card { border: 1px solid #d4d4d4; background: #fafafa; padding: 7px 6px; margin-bottom: 6px; color: #4c4c4c; }
.pages { height: 62px; } .filters { height: 78px; } .marks { height: 241px; }
.auto { height: 21px; margin-top: 12px; border: 1px solid #c8c8c8; border-radius: 2px; display: flex; align-items: center; padding-left: 10px; color: #5c5c5c; letter-spacing: .1px; }
.auto span { margin-left: 6px; flex: 1; }
.auto em { border-left: 1px solid #ddd; height: 19px; width: 18px; display: flex; align-items: center; justify-content: center; }
.buttons { display: grid; grid-template-columns: 43px 42px 43px; gap: 6px; margin-top: 6px; }
.buttons div { height: 42px; border: 1px solid #d0d0d0; display: flex; flex-direction: column; align-items: center; padding-top: 4px; letter-spacing: 0; }
.buttons svg { width: 18px; height: 18px; margin-bottom: 2px; }
.enc { display: flex; align-items: center; margin-left: 5px; height: 20px; margin-top: 9px; }
.enc + .enc { margin-top: 3px; }
.enc svg { width: 18px; height: 18px; margin-right: 2px; }
.enc .pill { width: 111px; letter-spacing: .45px; }
.pill { height: 20px; border-radius: 10px; background: #00b180; color: #fff; padding-left: 10.500px; line-height: 19px; width: 148px; margin-right: 2px; white-space: nowrap; flex: none; letter-spacing: .45px; }
.pill.blue { background: #4996b2; }
.work { width: 984px; margin-left: 6px; }
.shelf { height: 28px; border: 1px solid #d4d4d4; background: #fafafa; margin-bottom: 6px; display: flex; align-items: center; }
.shelfname { width: 125px; height: 26px; border-right: 1px solid #d4d4d4; margin-right: 2px; display: flex; align-items: center; gap: 7px; padding-left: 6px; color: #4c4c4c; }
.lower { display: flex; gap: 6px; align-items: flex-start; }
.view { width: 824px; height: 519px; background: #fff; border: 1px solid #d4d4d4; position: relative; display: grid; grid-template-columns: 796px 20px; grid-template-rows: 46px 463px; padding-left: 9px; }
.view h1 { grid-column: 1 / 3; margin: 0 11px 0 -1px; font: 600 19.500px/50px "Open Sans", sans-serif; letter-spacing: .03px; text-align: center; color: #333; }
.viz { display: grid; grid-template-columns: 80px 81px 1fr; grid-template-rows: 21px 140px 200px 102px; width: 788px; color: #7c7c7c; border-right: 1px solid #ddd; border-bottom: 1px solid #ddd; letter-spacing: .4px; }
.head { grid-column: 1 / 3; border-right: 1px solid #ddd; border-bottom: 1px solid #ddd; display: flex; align-items: flex-end; color: #3c3c3c; line-height: 15px; }
.head span { width: 80px; padding-left: 6px; }
.corner, .pane, .rel, .female { border-bottom: 1px solid #e0e0e0; }
.sex, .rel { padding-left: 6px; line-height: 17px; }
.rel { border-right: 1px solid #ddd; }
.r1 { padding-top: 23px; } .r2 { padding-top: 83px; } .r3 { padding-top: 69px; border-bottom: 0; }
.male { padding-top: 91px; }
.pane { padding-left: 123px; overflow: hidden; }
.pane:last-child { border-bottom: 0; }
.map { width: 379px; overflow: hidden; }
.m1 { height: 140px; } .m2 { height: 200px; } .m3 { height: 101px; }
.mapword { font: 7px Roboto, sans-serif; letter-spacing: 0; fill: #a0a0a0; }
.scroll { width: 15px; margin-top: 20px; height: 442px; background: #f0f0f0; margin-left: -4px; display: flex; flex-direction: column; justify-content: space-between; }
.scroll i { height: 109px; background: #cdcdcd; margin-top: 40px; }
.unknown { position: absolute; left: 692px; top: 484px; width: 99px; height: 19px; border-radius: 3px; background: #b0b0b0; color: #fff; font: bold 12px/19px "Noto Sans", sans-serif; text-align: center; letter-spacing: .2px; }
.legend { width: 154px; height: 71px; border: 1px solid #d4d4d4; background: #fafafa; padding: 7px 4px; color: #4c4c4c; letter-spacing: .2px; }
.legend > span { padding-left: 2px; }
.ramp { height: 16px; margin-top: 10px; border: 1px solid #aaa; background: linear-gradient(90deg, #bce4d8, #7cc3ca 35%, #409dba 58%, #2c5985); }
.range { display: flex; justify-content: space-between; line-height: 19px; }
.tabs { height: 31px; background: #e6e6e6; border-top: 1px solid #d0d0d0; border-bottom: 1px solid #d0d0d0; display: flex; color: #606060; }
.tabs span { border-right: 1px solid #cacaca; display: flex; align-items: center; justify-content: center; gap: 3px; letter-spacing: .1px; }
.tabs svg { width: 16px; height: 16px; }
.tabs .ds { width: 131px; justify-content: flex-start; padding-left: 6px; gap: 2px; letter-spacing: .2px; }
.tabs .sheet { width: 57px; padding-right: 4px; letter-spacing: .2px; }
.tabs .active { width: 56px; background: #fafafa; color: #333; font-weight: 500; letter-spacing: .2px; padding: 0 0 2px; }
.tabs .d1 { width: 105px; padding-right: 8px; } .tabs .d2 { width: 103px; padding-right: 5px; } .tabs .st { width: 72px; padding-right: 2px; } .tabs .add { width: 32px; }
.ln { fill: none; stroke: #666; } .plus { stroke: #555; stroke-width: 2; }
.status { height: 20px; background: #ebebeb; display: flex; line-height: 20px; letter-spacing: 0; font-size: 11.500px; position: relative; color: #3c3c3c; }
.s1 { width: 75px; padding-left: 3px; } .s2 { width: 113px; letter-spacing: -.2px; } .s3 { flex: 1; }
.cells { display: grid; grid-template-columns: 127px 27px 27px 47px; }
.cells i { border-left: 1px solid #ccc; }
.taskbar { height: 2px; background: #243242; padding-left: 48px; }
.taskbar i { display: block; width: 344px; height: 2px; background: #d6d6d6; }
.watermark { position: absolute; left: 1073px; top: 654px; font-family: "Open Sans", sans-serif; font-weight: 400; color: #aaa; opacity: .9; letter-spacing: 0; white-space: nowrap; }
.watermark div { font-size: 18px; line-height: 18px; letter-spacing: .28px; }
.watermark p { margin: 4px 0 0; font-size: 13.500px; line-height: 18px; letter-spacing: .2px; }
```
